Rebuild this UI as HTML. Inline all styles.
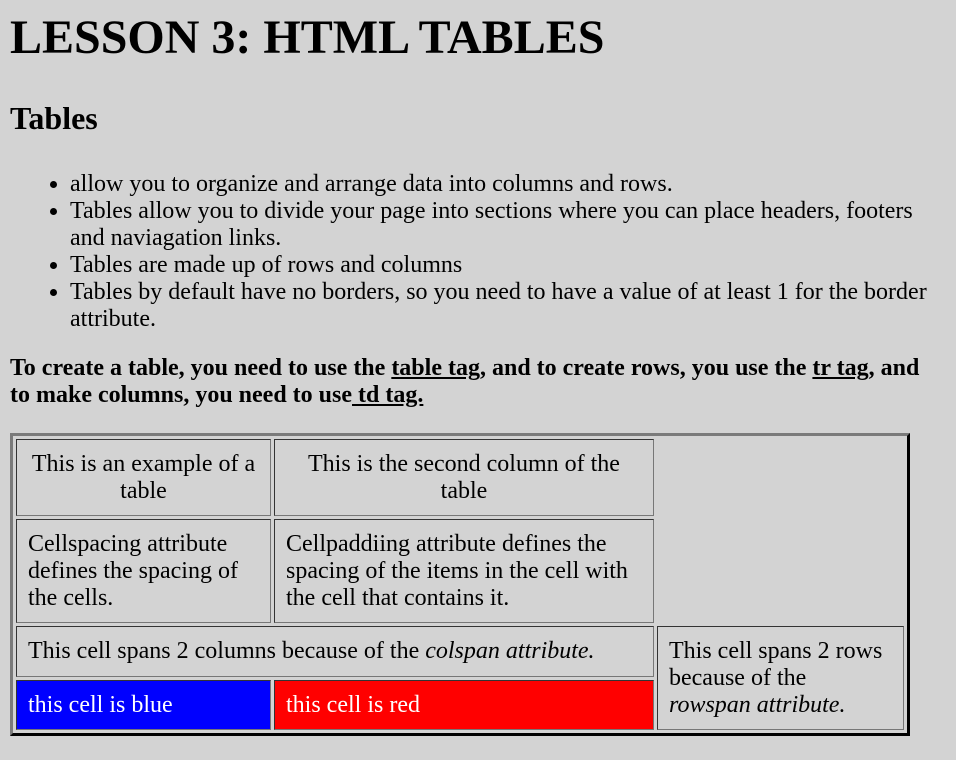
<!DOCTYPE html>
<html><head><meta charset="utf-8"><style>
body{margin:8px 10px;background:#d3d3d3;font-family:"Liberation Serif",serif;font-size:24px;color:#000;line-height:27px}
h1{font-size:48px;margin:8px 0 0;line-height:60px}
h2{font-size:32px;margin:30px 0 0;line-height:40px}
ul{margin:33px 0 0;padding-left:60px;line-height:27px}
p{margin:22px 0 0;line-height:27px;font-weight:bold;width:920px}
table{margin-top:24px;border:3px outset #888;border-color:#7a7a7a #333 #333 #7a7a7a;border-spacing:3px;width:900px}
td{border:1px solid;border-color:#333 #777 #777 #333;padding:10px 11px;line-height:27px;vertical-align:middle}
</style></head><body>
<h1>LESSON 3: HTML TABLES</h1>
<h2>Tables</h2>
<ul>
<li>allow you to organize and arrange data into columns and rows.</li>
<li>Tables allow you to divide your page into sections where you can place headers, footers and naviagation links.</li>
<li>Tables are made up of rows and columns</li>
<li>Tables by default have no borders, so you need to have a value of at least 1 for the border attribute.</li>
</ul>
<p>To create a table, you need to use the <u>table tag</u>, and to create rows, you use the <u>tr tag</u>, and to make columns, you need to use<u> td tag.</u></p>
<table>
<tr><td style="width:231px;height:55px;text-align:center;padding-top:10px;padding-bottom:10px">This is an example of a table</td><td style="width:356px;text-align:center">This is the second column of the table</td><td style="border:none"></td></tr>
<tr><td style="height:82px">Cellspacing attribute defines the spacing of the cells.</td><td>Cellpaddiing attribute defines the spacing of the items in the cell with the cell that contains it.</td></tr>
<tr><td colspan="2" style="height:27px;padding-top:11px;padding-bottom:11px">This cell spans 2 columns because of the <i>colspan attribute.</i></td><td rowspan="2" style="width:223px">This cell spans 2 rows because of the <i>rowspan attribute.</i></td></tr>
<tr><td style="background:#00f;color:#fff;height:28px;padding-top:10px;padding-bottom:10px">this cell is blue</td><td style="background:#f00;color:#fff">this cell is red</td></tr>
</table>
</body></html>
